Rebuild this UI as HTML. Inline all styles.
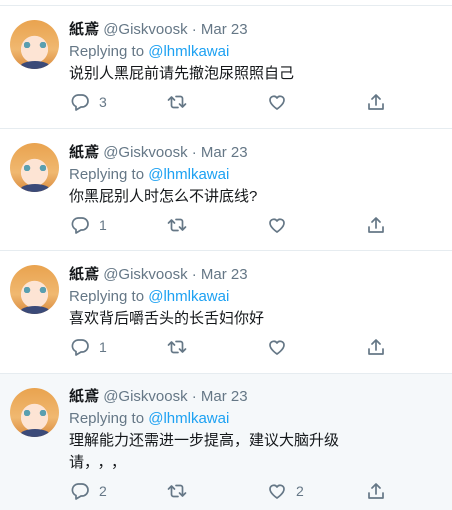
<!DOCTYPE html>
<html><head><meta charset="utf-8"><style>
*{margin:0;padding:0;box-sizing:border-box}
body{width:452px;height:510px;overflow:hidden;background:#fff;font-family:"Liberation Sans","Noto Sans CJK SC",sans-serif;position:relative}
.t{position:absolute;left:0;width:452px;border-top:1px solid #e6ecf0}
.av{position:absolute;left:10px;width:49px;height:49px;border-radius:50%;overflow:hidden;background:radial-gradient(circle at 50% 60%,#fde4d4 0 35%,transparent 36%),linear-gradient(#e9a34f,#f0b870 60%,#d98a3e)}
.av:after{content:"";position:absolute;left:14px;top:22px;width:22px;height:6px;background:radial-gradient(circle at 3px 3px,#5a9fb0 3px,transparent 3.5px),radial-gradient(circle at 19px 3px,#5a9fb0 3px,transparent 3.5px)}
.av:before{content:"";position:absolute;left:10px;bottom:-4px;width:30px;height:12px;background:#3b4a78;border-radius:50% 50% 0 0}
.l{position:absolute;left:69px;font-size:15px;line-height:22px;white-space:nowrap;color:#14171a}
.n{font-weight:bold}
.g{color:#657786}
.b{color:#1da1f2}
.a{position:absolute;font-size:14px;color:#657786;display:flex;align-items:center}
.a svg{width:20px;height:20px;fill:none;stroke:#657786;stroke-width:1.7;stroke-linecap:round;stroke-linejoin:round}
.a span{margin-left:9px}
</style></head><body>
<div class="t" style="top:5px;height:123px"></div>
<div class="t" style="top:128px;height:122px"></div>
<div class="t" style="top:250px;height:123px"></div>
<div class="t" style="top:373px;height:137px;background:#f5f8fa"></div>

<div class="av" style="top:20px"></div>
<div class="l" style="top:19px"><span class="n">紙鳶</span> <span class="g">@Giskvoosk · Mar 23</span></div>
<div class="l g" style="top:41px">Replying to <span class="b">@lhmlkawai</span></div>
<div class="l" style="top:63px">说别人黑屁前请先撤泡尿照照自己</div>

<div class="av" style="top:143px"></div>
<div class="l" style="top:142px"><span class="n">紙鳶</span> <span class="g">@Giskvoosk · Mar 23</span></div>
<div class="l g" style="top:164px">Replying to <span class="b">@lhmlkawai</span></div>
<div class="l" style="top:186px">你黑屁别人时怎么不讲底线?</div>

<div class="av" style="top:265px"></div>
<div class="l" style="top:264px"><span class="n">紙鳶</span> <span class="g">@Giskvoosk · Mar 23</span></div>
<div class="l g" style="top:286px">Replying to <span class="b">@lhmlkawai</span></div>
<div class="l" style="top:308px">喜欢背后嚼舌头的长舌妇你好</div>

<div class="av" style="top:388px"></div>
<div class="l" style="top:386px"><span class="n">紙鳶</span> <span class="g">@Giskvoosk · Mar 23</span></div>
<div class="l g" style="top:408px">Replying to <span class="b">@lhmlkawai</span></div>
<div class="l" style="top:430px">理解能力还需进一步提高，建议大脑升级</div>
<div class="l" style="top:452px">请<span style="letter-spacing:6px">，，，</span></div>

<div id="acts"></div>
<script>
var ys=[102,225,347,491],c=[["3",""],["1",""],["1",""],["2","2"]];
var reply='<path d="M8 3h4a6 6 0 0 1 0 12h-1l-5 3v-3.5A6 6 0 0 1 8 3z"/>';
var rt='<path d="M1.5 8L4.5 5 7.5 8M4.5 5v8.5a2 2 0 0 0 2 2H11M18.5 12l-3 3-3-3M15.5 15V6.5a2 2 0 0 0-2-2H9"/>';
var heart='<path d="M10 17s-7-4.5-7-9a3.8 3.8 0 0 1 7-2 3.8 3.8 0 0 1 7 2c0 4.5-7 9-7 9z"/>';
var share='<path d="M10 3v10M6 7l4-4 4 4M3 12v5h14v-5"/>';
var h='';
ys.forEach(function(y,i){
h+='<div class="a" style="left:70px;top:'+(y-10)+'px"><svg viewBox="0 0 20 20">'+reply+'</svg><span>'+c[i][0]+'</span></div>';
h+='<div class="a" style="left:167px;top:'+(y-10)+'px"><svg viewBox="0 0 20 20">'+rt+'</svg></div>';
h+='<div class="a" style="left:267px;top:'+(y-10)+'px"><svg viewBox="0 0 20 20">'+heart+'</svg>'+(c[i][1]?'<span>'+c[i][1]+'</span>':'')+'</div>';
h+='<div class="a" style="left:366px;top:'+(y-10)+'px"><svg viewBox="0 0 20 20">'+share+'</svg></div>';
});
document.getElementById('acts').innerHTML=h;
</script>
</body></html>
